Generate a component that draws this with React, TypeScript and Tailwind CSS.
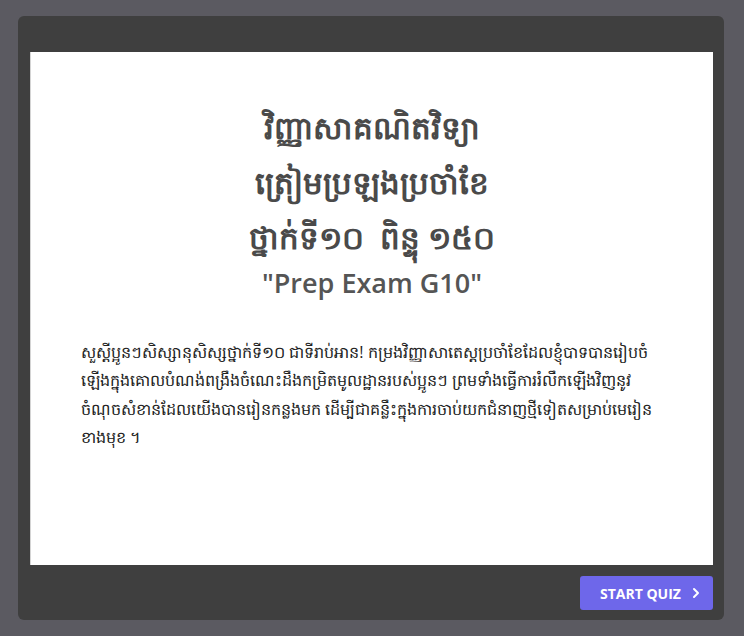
import { ChevronRight } from 'lucide-react'

const intro = [
  'សួស្តីប្អូនៗសិស្សានុសិស្សថ្នាក់ទី១០ ជាទីរាប់អាន! កម្រងវិញ្ញាសាតេស្តប្រចាំខែដែលខ្ញុំបាទបានរៀបចំ',
  'ឡើងក្នុងគោលបំណង់ពង្រឹងចំណេះដឹងកម្រិតមូលដ្ឋានរបស់ប្អូនៗ ព្រមទាំងធ្វើការរំលឹកឡើងវិញនូវ',
  'ចំណុចសំខាន់ដែលយើងបានរៀនកន្លងមក ដើម្បីជាគន្លឹះក្នុងការចាប់យកជំនាញថ្មីទៀតសម្រាប់មេរៀន',
  'ខាងមុខ ។',
]

export default function App() {
  return (
    <div className="min-h-screen bg-[#5b5a61] pt-4 pl-[18px] pr-5 pb-4" style={{ fontFamily: '"Open Sans", "Noto Sans", sans-serif' }}>
      <div className="h-[604px] w-[706px] rounded-md bg-[#3f3f3f] pt-9 pl-3 pr-[11px] flex flex-col">
        <div className="h-[513px] bg-white border-l border-[#d4d4d4] flex flex-col items-center">
          <div className="mt-[48px] text-center text-[#4a4a4a] font-bold text-[31px] leading-[55px]">
            <div>វិញ្ញាសាគណិតវិទ្យា</div>
            <div>ត្រៀមប្រឡងប្រចាំខែ</div>
            <div>ថ្នាក់ទី១០&nbsp;&nbsp;ពិន្ទុ ១៥០</div>
          </div>
          <div className="text-[27px] leading-9 text-[#555] font-semibold">"Prep Exam G10"</div>
          <div className="self-stretch mt-[37px] px-[50px] text-[16px] leading-[28.3px] text-[#222]">
            {intro.map((line, i) => (
              <div key={i} className="whitespace-nowrap">{line}</div>
            ))}
          </div>
        </div>
        <div className="flex justify-end mt-[11px]">
          <button className="h-[34px] w-[133px] rounded-[3px] bg-[#6e67ea] text-white text-[14px] font-bold flex items-center pl-5 gap-[7px]">
            START QUIZ
            <ChevronRight size={16} strokeWidth={3} />
          </button>
        </div>
      </div>
    </div>
  )
}
